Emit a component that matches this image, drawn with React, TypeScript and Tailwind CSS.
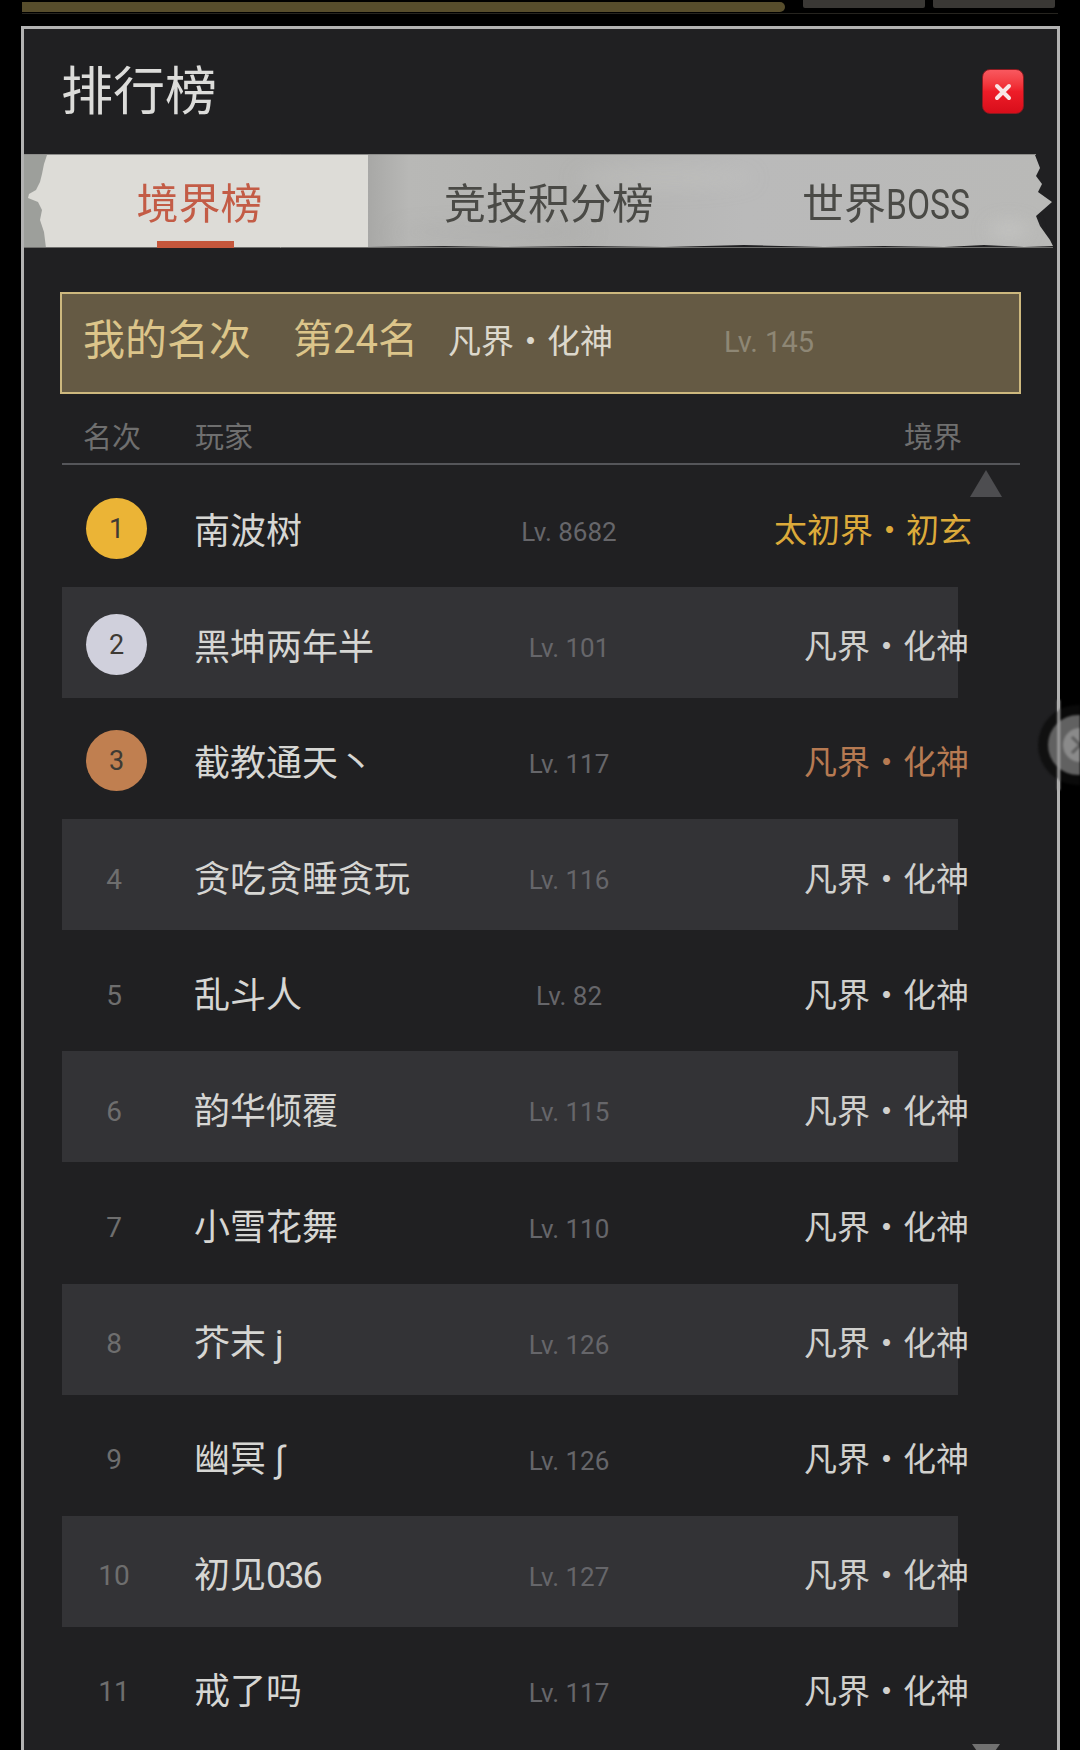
import React from "react";

type Player = {
  rank: number;
  name: React.ReactNode;
  level: string;
  realm: string;
  realmClass?: string;
  medal?: string;
};

const players: Player[] = [
  { rank: 1, name: "南波树", level: "Lv. 8682", realm: "太初界・初玄", realmClass: "text-[#dcaa3a] -mr-[3px]", medal: "bg-[#ebb436]" },
  { rank: 2, name: "黑坤两年半", level: "Lv. 101", realm: "凡界・化神", medal: "bg-[#d0d0dc]" },
  { rank: 3, name: "截教通天丶", level: "Lv. 117", realm: "凡界・化神", realmClass: "text-[#b67a52]", medal: "bg-[#c07f50]" },
  { rank: 4, name: "贪吃贪睡贪玩", level: "Lv. 116", realm: "凡界・化神" },
  { rank: 5, name: "乱斗人", level: "Lv. 82", realm: "凡界・化神" },
  { rank: 6, name: "韵华倾覆", level: "Lv. 115", realm: "凡界・化神" },
  { rank: 7, name: "小雪花舞", level: "Lv. 110", realm: "凡界・化神" },
  { rank: 8, name: "芥末 j", level: "Lv. 126", realm: "凡界・化神" },
  { rank: 9, name: "幽冥 ∫", level: "Lv. 126", realm: "凡界・化神" },
  { rank: 10, name: <>初见<span className="tracking-[-2px]">036</span></>, level: "Lv. 127", realm: "凡界・化神" },
  { rank: 11, name: "戒了吗", level: "Lv. 117", realm: "凡界・化神" },
];

// Torn paper strip behind the three tabs
function TabPaper() {
  return (
    <svg className="absolute inset-0 h-full w-full" viewBox="0 0 1033 94" preserveAspectRatio="none">
      <defs>
        <linearGradient id="inactivePaper" x1="0" x2="1" y1="0" y2="0">
          <stop offset="0" stopColor="#a8a8a6" />
          <stop offset="0.06" stopColor="#b8b8b6" />
          <stop offset="0.3" stopColor="#b3b3b1" />
          <stop offset="0.55" stopColor="#bababa" />
          <stop offset="1" stopColor="#b9b9b7" />
        </linearGradient>
        <filter id="paperSoft">
          <feGaussianBlur stdDeviation="0.6" />
        </filter>
        <filter id="paperCloud">
          <feGaussianBlur stdDeviation="9" />
        </filter>
      </defs>
      <g filter="url(#paperSoft)">
        <path d="M0 0H344V94H0Z" fill="#9d9f9b" />
        <path
          d="M23 1L20 10L18 20L16 28L12 36L5 40L4 44L14 48L18 56L16 66L20 78L22 94H344V1Z"
          fill="#dddcd7"
        />
        <path
          d="M344 1H1011L1016 14L1012 22L1018 30L1014 38L1028 48L1012 62L1016 72L1026 86L1029 92L1000 93L960 91L920 93L860 92L800 93L720 91L640 93L560 92L480 93L420 92L344 93Z"
          fill="url(#inactivePaper)"
        />
      </g>
      <g filter="url(#paperCloud)">
        <ellipse cx="985" cy="76" rx="20" ry="8" fill="#cfcfcd" opacity="0.5" />
        <ellipse cx="640" cy="24" rx="90" ry="12" fill="#c6c6c4" opacity="0.3" />
        <ellipse cx="470" cy="78" rx="100" ry="8" fill="#a6a6a4" opacity="0.3" />
      </g>
      <path d="M0 0.5H1012" stroke="#8d8d8b" strokeWidth="1" />
      <path d="M0 93.5H1029" stroke="#6f6f6d" strokeWidth="1" />
    </svg>
  );
}

function CloseButton() {
  return (
    <button className="flex h-[45px] w-[42px] items-center justify-center rounded-[8px] border border-[#8a1a20] bg-gradient-to-b from-[#f9585f] via-[#ee1c28] to-[#d80d1a]">
      <svg width="20" height="20" viewBox="0 0 20 20">
        <path d="M4 4L16 16M16 4L4 16" stroke="#f8e6e6" strokeWidth="4" strokeLinecap="round" />
      </svg>
    </button>
  );
}

function RankCell({ player }: { player: Player }) {
  if (player.medal) {
    return (
      <div className={`mb-[2px] flex h-[61px] w-[61px] flex-none items-center justify-center rounded-full pt-[3px] text-[27px] text-[#3e3a34] ${player.medal}`}>
        {player.rank}
      </div>
    );
  }
  return <div className="mt-[5px] w-[61px] flex-none pr-[5px] text-center text-[28px] text-[#6e6e6e]">{player.rank}</div>;
}

function Row({ player, striped }: { player: Player; striped: boolean }) {
  return (
    <div className={`flex h-[111px] w-[896px] flex-none items-center pl-[24px] pt-[5px] ${striped ? "bg-[#333336]" : ""}`}>
      <RankCell player={player} />
      <div className="ml-[47px] mt-[5px] w-[275px] flex-none whitespace-nowrap text-[36px] text-[#d6d6d3]">{player.name}</div>
      <div className="mt-[7px] w-[200px] flex-none text-center text-[26px] text-[#66666a]">{player.level}</div>
      <div className="mt-[4px] flex w-[300px] flex-none justify-end">
        <span className={`whitespace-nowrap text-[33px] ${player.realmClass ?? "text-[#d0d0cd]"}`}>{player.realm}</span>
      </div>
    </div>
  );
}

export default function App() {
  return (
    <div
      className="relative h-[1750px] w-[1080px] overflow-hidden bg-black"
      style={{ fontFamily: 'Roboto, "Noto Sans CJK SC", sans-serif' }}
    >
      {/* Progress bar and buttons of the layer behind the dialog */}
      <div className="ml-[22px] flex h-[14px] w-[1036px] items-start border-b border-[#26241f]">
        <div className="mt-[2px] h-[10px] w-[763px] rounded-r-[5px] bg-[#574d2c]" />
        <div className="ml-[18px] h-[8px] w-[122px] rounded-b-[2px] bg-[#3a3835]" />
        <div className="ml-[8px] h-[8px] w-[122px] rounded-b-[2px] bg-[#3a3835]" />
      </div>

      <div className="ml-[21px] mt-[12px] h-[1800px] w-[1039px] border-[3px] border-[#b2b2b2] bg-[#202022]">
        <div className="flex h-[125px] items-center justify-between pl-[37px] pr-[33px]">
          <h1 className="mt-[2px] text-[52px] leading-none font-normal text-[#dcdcda]">排行榜</h1>
          <CloseButton />
        </div>

        <div className="relative flex h-[94px] items-center text-[42px] text-[#4a4a46]">
          <TabPaper />
          <div className="relative flex h-full w-[344px] items-center justify-center pl-[7px] text-[#c35c46]">
            <span className="mt-[6px]">境界榜</span>
            <div className="absolute bottom-0 left-[133px] h-[7px] w-[77px] bg-[#c5573c]" />
          </div>
          <div className="relative mt-[6px] w-[362px] text-center">竞技积分榜</div>
          <div className="relative mt-[6px] w-[312px] whitespace-nowrap text-center">
            世界<span className="mr-[-21px] inline-block origin-left scale-x-[0.8]">BOSS</span>
          </div>
        </div>

        <div className="ml-[36px] mt-[44px] flex h-[102px] w-[961px] items-center border-2 border-[#cdb87e] bg-[#655a44] pb-[6px] pl-[21px]">
          <span className="w-[210px] flex-none text-[42px] text-[#dcc58a]">我的名次</span>
          <span className="w-[155px] flex-none text-[40px] text-[#dcc58a]">第24名</span>
          <span className="mt-[4px] w-[276px] flex-none text-[33px] text-[#dcd8cc]">凡界・化神</span>
          <span className="mt-[6px] text-[29px] text-[#8e8775]">Lv. 145</span>
        </div>

        <div className="ml-[38px] flex h-[71px] w-[958px] items-center border-b-2 border-[#55565a] pb-[2px] pt-[22px] text-[29px] text-[#6f6f6f]">
          <span className="ml-[21px] w-[112px]">名次</span>
          <span>玩家</span>
          <span className="ml-auto mr-[58px]">境界</span>
        </div>

        <div className="ml-[38px] mt-[6px] flex flex-col gap-[5.1px]">
          {players.map((p, i) => (
            <Row key={p.rank} player={p} striped={i % 2 === 1} />
          ))}
        </div>
      </div>

      {/* Scroll arrows */}
      <div className="absolute left-[970px] top-[470px] h-0 w-0 border-x-[16px] border-b-[27px] border-x-transparent border-b-[#4d4d50]" />
      <div className="absolute left-[972px] top-[1744px] h-0 w-0 border-x-[14px] border-t-[20px] border-x-transparent border-t-[#717171]" />

      {/* Floating dismiss handle on the screen edge */}
      <svg className="absolute left-[1030px] top-[700px] blur-[1px]" width="50" height="90" viewBox="0 0 50 90">
        <circle cx="48" cy="45" r="40" fill="#0c0c0c" opacity="0.8" />
        <circle cx="48" cy="45" r="30" fill="#616161" />
        <circle cx="50" cy="45" r="17" fill="#8a8a8a" />
        <path d="M42 37L58 53M58 37L42 53" stroke="#5c5c5c" strokeWidth="3" />
        <rect x="27.5" y="0" width="2.5" height="90" fill="#a8a8a8" />
      </svg>
    </div>
  );
}
